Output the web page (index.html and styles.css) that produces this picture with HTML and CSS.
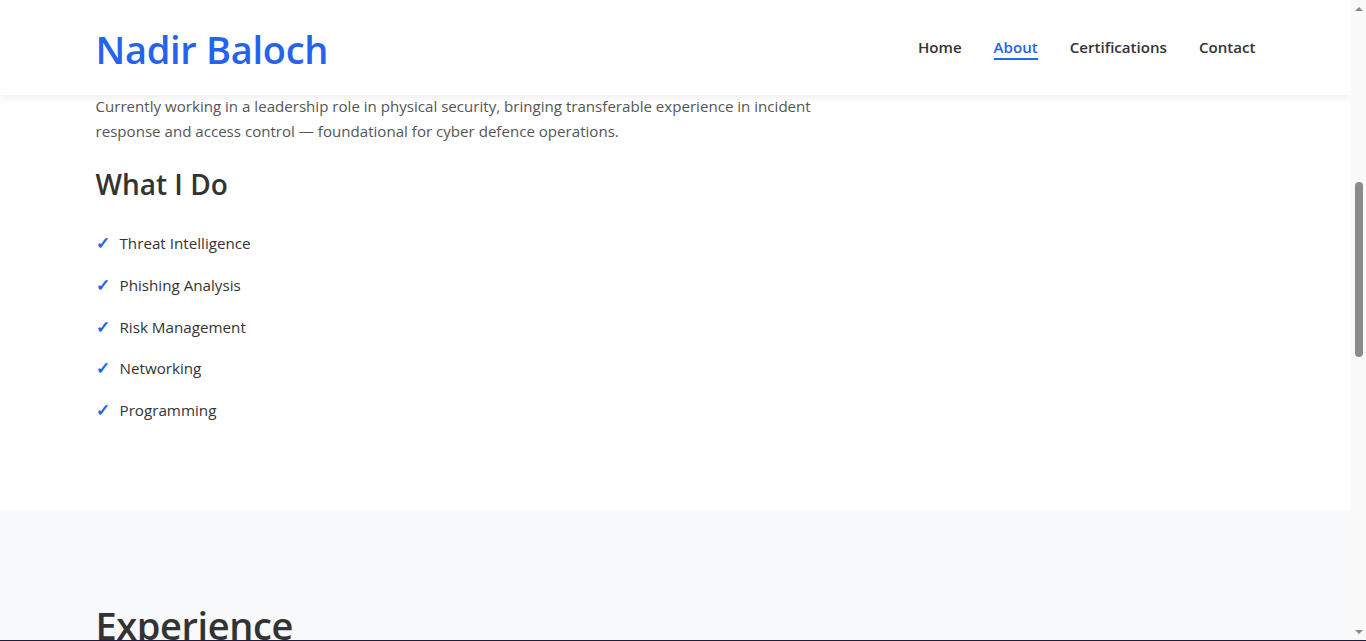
FILE: index.html
```html
<!DOCTYPE html>
<html lang="en">
<head>
<meta charset="utf-8">
<title>Nadir Baloch</title>
<link rel="stylesheet" href="styles.css">
</head>
<body>
<div class="screen">
  <div class="viewport">
    <div class="page">
      <header class="site-header">
        <div class="container header-inner">
          <a class="logo" href="#">Nadir Baloch</a>
          <nav class="nav">
            <a href="#">Home</a>
            <a href="#" class="active">About</a>
            <a href="#">Certifications</a>
            <a href="#">Contact</a>
          </nav>
        </div>
      </header>
      <section class="about">
        <div class="container">
          <p class="intro">Currently working in a leadership role in physical security, bringing transferable experience in incident response and access control — foundational for cyber defence operations.</p>
          <h2 class="section-sub">What I Do</h2>
          <ul class="checks">
            <li><span class="tick">✓</span>Threat Intelligence</li>
            <li><span class="tick">✓</span>Phishing Analysis</li>
            <li><span class="tick">✓</span>Risk Management</li>
            <li><span class="tick">✓</span>Networking</li>
            <li><span class="tick">✓</span>Programming</li>
          </ul>
        </div>
      </section>
      <section class="experience">
        <div class="container">
          <h2 class="section-title">Experience</h2>
        </div>
      </section>
    </div>
    <div class="scrollbar">
      <div class="sb-btn"><span class="arrow-up"></span></div>
      <div class="sb-track"><div class="sb-thumb"></div></div>
      <div class="sb-btn"><span class="arrow-down"></span></div>
    </div>
  </div>
  <div class="edge"></div>
</div>
</body>
</html>
```
FILE: styles.css
```css
* { box-sizing: border-box; }
html, body { margin: 0; padding: 0; height: 641px; overflow: hidden; }
body {
  font-family: "Open Sans", "Noto Sans", "Liberation Sans", sans-serif;
  color: #333;
  background: #fff;
}
.screen { display: flex; flex-direction: column; height: 641px; }
.viewport { display: flex; height: 640px; }
.page { flex: 1; display: flex; flex-direction: column; overflow: hidden; background: #fff; }
.edge { height: 1px; background: #1f1a3b; }

.container { width: 1160px; margin: 0 auto; }

.site-header {
  height: 95px;
  background: #fff;
  box-shadow: 0 2px 10px rgba(0,0,0,0.08);
  position: relative;
  z-index: 2;
  flex: none;
}
.header-inner { height: 95px; display: flex; align-items: center; justify-content: space-between; }
.logo {
  color: #2563eb;
  font-size: 38px;
  font-weight: 600;
  text-decoration: none;
  letter-spacing: -0.3px;
  margin-top: 2px;
}
.nav { display: flex; gap: 32px; margin-top: -2px; }
.nav a {
  color: #333;
  text-decoration: none;
  font-size: 15.1px;
  font-weight: 600;
  padding: 3px 0 1px;
  border-bottom: 2px solid transparent;
}
.nav a.active { color: #2563eb; border-bottom-color: #2563eb; }

.about { flex: none; padding-bottom: 80px; }
.intro {
  margin: -1px 0 0;
  max-width: 745px;
  font-size: 15.1px;
  line-height: 25px;
  color: #555;
}
.section-sub {
  margin: 23px 0 0;
  font-size: 28px;
  font-weight: 600;
  line-height: 34px;
  color: #333;
}
.checks { list-style: none; margin: 21px 0 0; padding: 0; }
.checks li {
  display: flex;
  align-items: center;
  font-size: 15.2px;
  line-height: 24px;
  padding: 9px 0 8.75px;
  color: #333;
}
.tick { color: #2563eb; width: 24px; font-size: 17px; font-weight: 700; }

.experience { flex: 1; background: #f8f9fa; padding-top: 90px; }
.section-title {
  margin: 0;
  font-size: 38px;
  font-weight: 600;
  line-height: 48px;
  color: #333;
  letter-spacing: -0.4px;
}

.scrollbar { width: 15px; flex: none; background: #f9f9f9; display: flex; flex-direction: column; }
.sb-btn { height: 17px; display: flex; align-items: center; justify-content: center; }
.arrow-up { width: 0; height: 0; border-left: 4px solid transparent; border-right: 4px solid transparent; border-bottom: 4px solid #8a8a8a; }
.arrow-down { width: 0; height: 0; border-left: 4px solid transparent; border-right: 4px solid transparent; border-top: 4px solid #8a8a8a; }
.sb-track { flex: 1; display: flex; justify-content: center; }
.sb-thumb { width: 8px; height: 175px; margin-top: 165px; background: #8b8b8b; border-radius: 4px; }
```
